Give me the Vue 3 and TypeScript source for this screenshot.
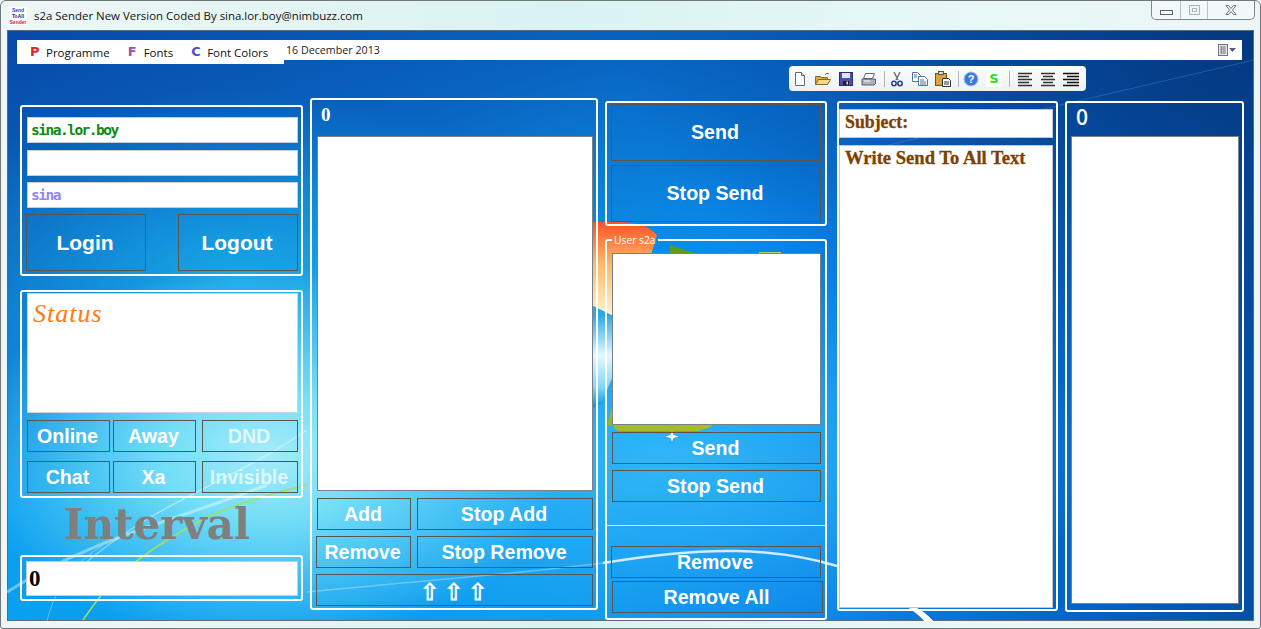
<template>
  <div class="window">
    <div class="titlebar">
      <div class="app-icon">
        <span class="ai-blue">Send</span>
        <span class="ai-navy">ToAll</span>
        <span class="ai-red">Sender</span>
      </div>
      <span class="title">s2a Sender New Version Coded By sina.lor.boy@nimbuzz.com</span>
      <div class="controls">
        <div class="ctl ctl-min"><i></i></div>
        <div class="ctl ctl-max"><i></i></div>
        <div class="ctl ctl-close">
          <svg width="14" height="12" viewBox="0 0 14 12">
            <path d="M2 1.500h2.500L7 4.500l2.500-3H12L8.500 6 12 10.500H9.500L7 7.500l-2.500 3H2L5.500 6z" fill="#fff" stroke="#6d7278" stroke-width="1" />
          </svg>
        </div>
      </div>
    </div>

    <div class="client">
      <svg class="wallpaper" width="1247" height="591" viewBox="0 0 1247 591">
        <defs>
          <linearGradient id="flag" gradientUnits="userSpaceOnUse" x1="0" y1="192" x2="0" y2="285">
            <stop offset="0" stop-color="#fb5226" />
            <stop offset=".45" stop-color="#fdb968" />
            <stop offset="1" stop-color="#fff3cc" />
          </linearGradient>
          <linearGradient id="shard" gradientUnits="userSpaceOnUse" x1="0" y1="285" x2="0" y2="375">
            <stop offset="0" stop-color="#2aa8ea" />
            <stop offset=".45" stop-color="#e4f8fd" />
            <stop offset=".8" stop-color="#7fd8f6" />
            <stop offset="1" stop-color="#1a9ae0" />
          </linearGradient>
        </defs>
        <path d="M586 192h30c18 1 28 6 34 13l-6 20-38 5v56l-20-10z" fill="url(#flag)" />
        <path d="M586 276l20 10v60l-12 28-8 4z" fill="url(#shard)" />
        <path d="M663 215l30 10-30 1z" fill="#5f9c1d" />
        <path d="M752 222h22v2h-22z" fill="#a6d66b" />
        <path d="M600 395l6-22v22z" fill="#9ab62a" />
        <path d="M606 395h100c-6 4-12 6-20 6h-72c-4 0-6-2-8-6z" fill="#a9bb24" />
        <path d="M665 401l1.500 4 5 1.500-5 1.500-1.500 3.500-1.500-3.500-5-1.500 5-1.500z" fill="#fffbe0" />
        <path d="M0 562C80 510 170 490 260 455" fill="none" stroke="#fff" stroke-width="3" opacity=".4" />
        <path d="M70 540C150 470 220 455 300 400" fill="none" stroke="#fff" stroke-width="1.500" opacity=".4" />
        <path d="M40 591c10-40 30-60 55-75" fill="none" stroke="#fff" stroke-width="1" opacity=".35" />
        <path d="M76 590C100 555 120 530 200 487 240 470 270 462 300 455" fill="none" stroke="#a5de5c" stroke-width="1.500" />
        <path d="M300 562C400 552 500 545 596 533" fill="none" stroke="#dff5ff" stroke-width="1.500" opacity=".35" />
        <path d="M596 533C650 524 690 520 730 521 770 522 800 527 830 536" fill="none" stroke="#fff" stroke-width="2.500" opacity=".8" />
        <path d="M908 577c8 4 14 9 20 16h-9c-5-6-11-11-19-16z" fill="#fff" />
        <path d="M860 120L1247 30" fill="none" stroke="#7fb4e0" stroke-width="1" opacity=".25" />
      </svg>

      <div class="top-row">
        <div class="menu">
          <span class="menu-item"><b class="mi mi-p">P</b>Programme</span>
          <span class="menu-item"><b class="mi mi-f">F</b>Fonts</span>
          <span class="menu-item"><b class="mi mi-c">C</b>Font Colors</span>
        </div>
        <div class="date">
          <span>16 December 2013</span>
          <svg width="18" height="12" viewBox="0 0 18 12">
            <rect x="0.500" y="0.500" width="9" height="11" fill="#e4e6ea" stroke="#70757d" />
            <path d="M2 3h6M2 5h6M2 7h6M2 9h6M3.500 2v8M6 2v8" stroke="#8a8f98" stroke-width="1" />
            <path d="M11 4h7l-3.500 4z" fill="#505d7d" />
          </svg>
        </div>
      </div>

      <div class="toolbar-row">
        <div class="toolbar">
          <svg class="tb" viewBox="0 0 16 16"><path d="M3.500 1.500h6l3 3v10h-9z" fill="#fff" stroke="#5a6a80" /><path d="M9.500 1.500v3h3" fill="#d6e0ea" stroke="#5a6a80" /></svg>
          <svg class="tb" viewBox="0 0 16 16"><path d="M.500 5.500h5l1 1h6v7H.500z" fill="#d9a93f" stroke="#8b6a20" /><path d="M.500 13.500l3-5h12l-3 5z" fill="#f5d98a" stroke="#8b6a20" /><path d="M10 4c1-2 3-2 4-1" fill="none" stroke="#4a6a96" /></svg>
          <svg class="tb" viewBox="0 0 16 16"><rect x="1.500" y="1.500" width="13" height="13" fill="#4d4fb0" stroke="#2c2d70" /><rect x="4" y="2" width="8" height="5" fill="#dfe3f4" /><rect x="5" y="10" width="6" height="4" fill="#222" /><rect x="8.500" y="10.500" width="1.500" height="3" fill="#ddd" /></svg>
          <svg class="tb" viewBox="0 0 16 16"><path d="M4.500 2.500h9l-2 5h-9z" fill="#fff" stroke="#5d6a7a" /><path d="M1 8h13.500v4.500L13 14H1z" fill="#a9b4c0" stroke="#55606e" /><path d="M3 10h6" stroke="#fff" /></svg>
          <i class="sep"></i>
          <svg class="tb" viewBox="0 0 16 16"><path d="M5 1l4 8M11 1L7 9" stroke="#6a7480" stroke-width="1.500" /><circle cx="5" cy="12.500" r="2.200" fill="none" stroke="#24418f" stroke-width="1.500" /><circle cx="11" cy="12.500" r="2.200" fill="none" stroke="#24418f" stroke-width="1.500" /></svg>
          <svg class="tb" viewBox="0 0 16 16"><path d="M.500 1.500h5l3 3v6h-8z" fill="#fff" stroke="#4c70a8" /><path d="M6.500 5.500h6l3 3v6h-9z" fill="#fff" stroke="#4c70a8" /><path d="M8 9h4M8 11h6M8 13h6M2 4h3M2 6h3" stroke="#4c70a8" /></svg>
          <svg class="tb" viewBox="0 0 16 16"><rect x="0.500" y="2.500" width="11" height="12" fill="#d9a53c" stroke="#6e5620" /><rect x="3.500" y="0.500" width="5" height="3" fill="#ddd" stroke="#555" /><path d="M7.500 7.500h6l2 2v6h-8z" fill="#fff" stroke="#333" /><path d="M9 11h5M9 13h5" stroke="#333" /></svg>
          <i class="sep"></i>
          <svg class="tb" viewBox="0 0 16 16"><circle cx="8" cy="8" r="7" fill="#3a78dc" stroke="#a9c3ec" /><text x="8" y="12" text-anchor="middle" class="help-q">?</text></svg>
          <span class="tb tb-s">S</span>
          <i class="sep sep-last"></i>
          <svg class="tb" viewBox="0 0 16 16"><path d="M1 2.500h14M1 5.500h11M1 8.500h14M1 11.500h11M1 14.500h14" stroke="#333" stroke-width="1.400" /></svg>
          <svg class="tb" viewBox="0 0 16 16"><path d="M1 2.500h14M3 5.500h10M1 8.500h14M3 11.500h10M1 14.500h14" stroke="#333" stroke-width="1.400" /></svg>
          <svg class="tb" viewBox="0 0 16 16"><path d="M0 2.500h16M4 5.500h12M0 8.500h16M4 11.500h12M0 14.500h16" stroke="#111" stroke-width="1.400" /></svg>
        </div>
      </div>

      <div class="columns">
        <div class="col-left">
          <div class="group g-login">
            <div class="field f-user">sina.lor.boy</div>
            <div class="field f-pass"></div>
            <div class="field f-res">sina</div>
            <div class="login-row">
              <button class="btn btn-login">Login</button>
              <button class="btn btn-login">Logout</button>
            </div>
          </div>
          <div class="group g-status">
            <div class="status-box">Status</div>
            <div class="status-row">
              <button class="btn st st-a">Online</button>
              <button class="btn st st-b">Away</button>
              <button class="btn st st-c dim">DND</button>
            </div>
            <div class="status-row row-2">
              <button class="btn st st-a">Chat</button>
              <button class="btn st st-b">Xa</button>
              <button class="btn st st-c dim">Invisible</button>
            </div>
          </div>
          <div class="interval-label">Interval</div>
          <div class="group g-interval">
            <div class="interval-input">0</div>
          </div>
        </div>

        <div class="group col-mid">
          <div class="count">0</div>
          <div class="listbox mid-list"></div>
          <div class="mid-row mr-1">
            <button class="btn b-add">Add</button>
            <button class="btn b-stop">Stop Add</button>
          </div>
          <div class="mid-row mr-2">
            <button class="btn b-rem">Remove</button>
            <button class="btn b-stop">Stop Remove</button>
          </div>
          <button class="btn b-up">⇧ ⇧ ⇧</button>
        </div>

        <div class="col-send">
          <div class="group g-send">
            <button class="btn btn-big">Send</button>
            <button class="btn btn-big">Stop Send</button>
          </div>
          <fieldset class="g-users">
            <legend>User s2a</legend>
            <div class="listbox user-list"></div>
            <button class="btn btn-u">Send</button>
            <button class="btn btn-u u-stop">Stop Send</button>
            <hr class="divider" />
            <button class="btn btn-u u-rem">Remove</button>
            <button class="btn btn-u u-all">Remove All</button>
          </fieldset>
        </div>

        <div class="group col-text">
          <div class="subject">Subject:</div>
          <div class="body-text">Write Send To All Text</div>
        </div>

        <div class="group col-right">
          <div class="count count-r">0</div>
          <div class="listbox right-list"></div>
        </div>
      </div>
    </div>
  </div>
</template>

<script setup lang="ts">
</script>

<style>
html,
body {
  margin: 0;
  background: #fff;
}
</style>

<style scoped>
.window {
  box-sizing: border-box;
  width: 1261px;
  height: 629px;
  padding: 0 6px 7px;
  border: 1px solid #70767a;
  border-radius: 6px 6px 3px 3px;
  background: linear-gradient(90deg, #eef7f6, #d9f3f2 45%, #e6f7f7 70%, #edf6f6);
  font-family: "Open Sans", "Liberation Sans", sans-serif;
  overflow: hidden;
}

.titlebar {
  position: relative;
  display: flex;
  align-items: center;
  height: 29px;
  padding-left: 1px;
}

.app-icon {
  display: flex;
  flex-direction: column;
  align-items: center;
  width: 18px;
  margin-left: 1px;
  margin-top: 1px;
  background: #fff;
  font: 700 5px/6px "Liberation Sans", sans-serif;
}
.ai-blue { color: #2b3fd8; }
.ai-navy { color: #1b2a80; }
.ai-red { color: #e0203a; }

.title {
  margin-left: 7px;
  font-size: 11.450px;
  color: #111;
}

.controls {
  position: absolute;
  top: -1px;
  right: -1px;
  display: flex;
  height: 20px;
  box-sizing: border-box;
  border: 1px solid #81878c;
  border-top: 0;
  border-radius: 0 0 5px 5px;
  background: rgba(255, 255, 255, .35);
}
.ctl {
  display: flex;
  align-items: center;
  justify-content: center;
  height: 100%;
}
.ctl-min { width: 28px; border-right: 1px solid #b5c2c6; }
.ctl-min i { width: 11px; height: 3px; margin-top: 5px; border: 1px solid #5d646a; background: #fff; }
.ctl-max { width: 26px; border-right: 1px solid #b5c2c6; }
.ctl-max i { box-sizing: border-box; width: 11px; height: 10px; border: 1px solid #aab6ba; box-shadow: inset 0 0 0 2px #edf6f6, inset 0 0 0 3px #aab6ba; }
.ctl-close { width: 46px; }

.client {
  position: relative;
  height: 591px;
  box-sizing: border-box;
  padding: 10px 12px 0 10px;
  background:
    radial-gradient(ellipse 300px 190px at 260px 425px, #a4ecf9 0%, #74def7 34%, rgba(40, 180, 240, 0) 100%),
    radial-gradient(ellipse 340px 190px at 230px 250px, rgba(30, 185, 240, .7) 0%, rgba(30, 185, 240, 0) 100%),
    radial-gradient(ellipse 440px 190px at 660px 430px, rgba(50, 184, 248, .95) 0%, rgba(30, 160, 245, 0) 100%),
    radial-gradient(ellipse 640px 340px at 100% 0, rgba(5, 55, 125, .95) 0%, rgba(5, 60, 135, .6) 50%, rgba(5, 70, 150, 0) 100%),
    linear-gradient(160deg, rgba(8, 70, 165, .97) 0%, rgba(8, 76, 172, .7) 22%, rgba(8, 90, 180, 0) 46%),
    linear-gradient(90deg, #0a9ff0 0%, #0c99ee 45%, #087fe8 68%, #0460c4 88%, #044fa4 100%);
  box-shadow: inset 0 0 0 1px #5a6c7c;
  overflow: hidden;
}

.wallpaper {
  position: absolute;
  left: 0;
  top: 0;
}

.top-row,
.toolbar-row,
.columns {
  position: relative;
}

.top-row {
  display: flex;
  align-items: flex-start;
  height: 24px;
}

.menu {
  display: flex;
  width: 267px;
  height: 24px;
  align-items: center;
  padding-left: 13px;
  box-sizing: border-box;
  background: #fff;
  font-size: 11.500px;
  color: #111;
  white-space: nowrap;
}
.menu-item {
  display: flex;
  align-items: center;
  margin-right: 18px;
}
.mi {
  width: 10px;
  margin-right: 6px;
  font: 900 13px/12px "DejaVu Sans", sans-serif;
}
.mi-p { color: #ee1c25; }
.mi-f { color: #a050b0; }
.mi-c { color: #4a50d0; }

.date {
  flex: 1;
  display: flex;
  align-items: center;
  justify-content: space-between;
  height: 20px;
  padding: 0 6px 0 2px;
  background: #fff;
  font-size: 10.700px;
  color: #222;
}

.toolbar-row {
  display: flex;
  justify-content: flex-end;
  margin-top: 2px;
  margin-right: 156px;
}
.toolbar {
  display: flex;
  align-items: center;
  gap: 7px;
  box-sizing: border-box;
  width: 297px;
  height: 25px;
  padding-left: 3px;
  border-radius: 4px;
  background: linear-gradient(#fdfdfd, #eef0f3);
}
.tb {
  width: 16px;
  height: 16px;
  flex: none;
}
.tb-s {
  background: #fff;
  color: #14e61e;
  font: 900 13px/16px "DejaVu Sans", sans-serif;
  text-align: center;
}
.help-q {
  fill: #fff;
  font: 700 11px "Liberation Sans", sans-serif;
}
.sep {
  width: 1px;
  height: 16px;
  margin-right: -3px;
  background: #b0b4bb;
}
.sep-last { margin-right: 0; }

.columns {
  display: flex;
  gap: 7px;
  margin-top: 7px;
  margin-left: 3px;
}

.group {
  box-sizing: border-box;
  border: 2px solid #fff;
  border-radius: 3px;
}

.btn {
  display: block;
  box-sizing: border-box;
  padding: 0 2px 0 0;
  border: 1px solid #5a5550;
  background: transparent;
  color: #fff;
  font: 700 19.600px/1 "Liberation Sans", sans-serif;
}

.col-left {
  width: 283px;
  flex: none;
  padding-top: 7px;
}

.g-login {
  height: 171px;
  padding: 10px 3px 0 5px;
}
.field {
  height: 26px;
  box-sizing: border-box;
  padding-left: 3px;
  border: 1px solid #c6cdd6;
  background: #fff;
  font: 700 14.500px/24px "DejaVu Sans Mono", monospace;
  letter-spacing: -1.500px;
}
.f-user { color: #0a8a12; }
.f-pass { margin-top: 7px; }
.f-res { margin-top: 6px; color: #8c88f5; }
.login-row {
  display: flex;
  justify-content: space-between;
  margin: 6px 0 0 -1px;
}
.btn-login {
  width: 120px;
  height: 57px;
  font-size: 21px;
}

.g-status {
  height: 208px;
  margin-top: 14px;
  padding: 1px 3px 0 5px;
}
.status-box {
  height: 120px;
  box-sizing: border-box;
  padding: 5px 0 0 5px;
  border: 1px solid #ced5dc;
  background: #fff;
  color: #ff7a0a;
  font: italic 400 26px/1.150 "Liberation Serif", serif;
  letter-spacing: 1px;
}
.status-row {
  display: flex;
  margin-top: 7px;
}
.row-2 { margin-top: 9px; }
.st { height: 32px; padding-top: 2px; }
.st-a { width: 83px; }
.st-b { width: 83px; margin-left: 3px; }
.st-c { width: 96px; margin-left: 6px; }
.dim { color: rgba(255, 255, 255, .72); }

.interval-label {
  height: 57px;
  padding-left: 44px;
  box-sizing: border-box;
  color: #7f7f7f;
  font: 700 42px/54px "DejaVu Serif", serif;
}

.g-interval {
  height: 46px;
  padding: 4px 3px 0 4px;
}
.interval-input {
  height: 35px;
  box-sizing: border-box;
  padding-left: 2px;
  border: 1px solid #c6cdd6;
  background: #fff;
  color: #000;
  font: 700 23px/33px "Liberation Serif", serif;
}

.col-mid {
  width: 288px;
  height: 512px;
  flex: none;
  padding: 0 3px 0 4px;
}
.count {
  height: 36px;
  padding-left: 5px;
  color: #fff;
  font: 700 19px/30px "Liberation Serif", serif;
}
.listbox {
  box-sizing: border-box;
  border: 1px solid #7a8088;
  background: #fff;
}
.mid-list {
  width: 276px;
  height: 355px;
  margin-left: 1px;
}
.mid-row {
  display: flex;
  margin-top: 6px;
}
.mr-1 { margin-top: 7px; margin-left: 1px; }
.b-add { width: 94px; height: 32px; padding-top: 2px; }
.b-rem { width: 95px; height: 32px; padding-top: 2px; }
.b-stop { height: 32px; margin-left: 6px; width: 176px; padding-top: 2px; }
.b-up {
  width: 277px;
  height: 32px;
  margin-top: 6px;
  padding-top: 5px;
  font-size: 23px;
  word-spacing: -1px;
}

.col-send {
  width: 222px;
  flex: none;
  padding-top: 3px;
}
.g-send {
  height: 125px;
  padding: 1px 4px 0 4px;
}
.btn-big {
  width: 210px;
  height: 57px;
  margin-bottom: 4px;
}
.g-users {
  box-sizing: border-box;
  height: 387px;
  min-width: 0;
  margin: 7px 0 0;
  padding: 6px 4px 0 5px;
  border: 2px solid #fff;
  border-radius: 3px;
}
legend {
  margin-left: 0;
  padding: 0 2px;
  color: #fff;
  font: 400 10.300px/14px "Open Sans", "Liberation Sans", sans-serif;
}
.user-list {
  width: 209px;
  height: 172px;
}
.btn-u {
  width: 209px;
  height: 32px;
  margin-top: 7px;
  padding-top: 2px;
}
.u-stop { margin-top: 6px; }
.divider {
  height: 1px;
  margin: 23px -5px 20px;
  border: 0;
  background: #c6e6fb;
}
.u-rem { width: 210px; margin: 0 0 0 -1px; }
.u-all { width: 211px; margin: 3px 0 0; }

.col-text {
  width: 221px;
  height: 510px;
  flex: none;
  margin-top: 3px;
  margin-left: 3px;
  padding: 6px 3px 0 0;
}
.subject {
  width: 214px;
  height: 29px;
  box-sizing: border-box;
  padding-left: 5px;
  border: 1px solid #c0c6d0;
  background: #fff;
  color: #7f3f00;
  font: 700 17.800px/24px "Liberation Serif", serif;
  -webkit-text-stroke: .3px #7f3f00;
}
.body-text {
  width: 214px;
  height: 463px;
  box-sizing: border-box;
  margin-top: 7px;
  padding: 1px 0 0 5px;
  border: 1px solid #c0c6d0;
  background: #fff;
  color: #7f3f00;
  font: 700 18.600px/22px "Liberation Serif", serif;
  -webkit-text-stroke: .3px #7f3f00;
}

.col-right {
  width: 179px;
  height: 511px;
  flex: none;
  margin-top: 3px;
  padding: 0 3px 0 4px;
}
.count-r {
  height: 33px;
  padding-left: 5px;
  font: 600 21px/28px "Open Sans", sans-serif;
}
.right-list {
  width: 168px;
  height: 468px;
}
</style>
